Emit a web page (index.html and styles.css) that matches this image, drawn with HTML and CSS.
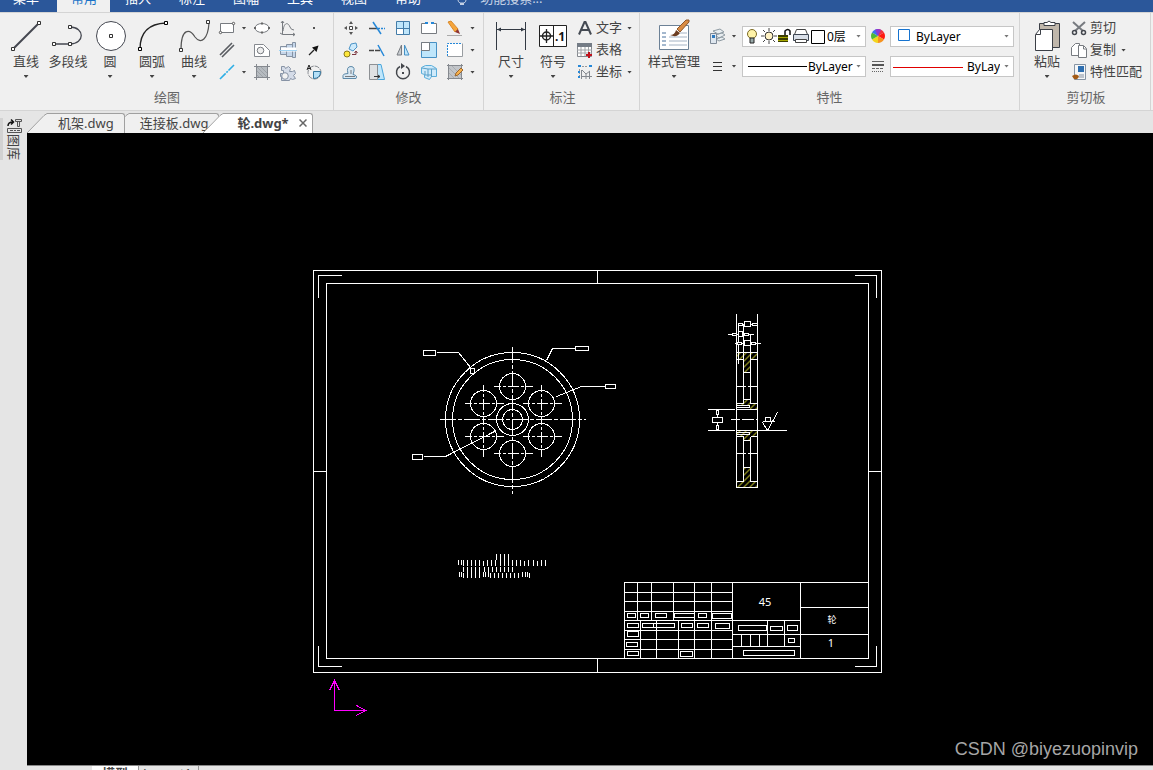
FILE: index.html
```html
<!DOCTYPE html>
<html lang="zh-CN">
  <head>
    <meta charset="UTF-8" />
    <meta name="viewport" content="width=device-width, initial-scale=1.0" />
    <title>轮.dwg</title>
    <link rel="stylesheet" href="styles.css">
  </head>
  <body>
    <nav class="menubar">
      <a href="#" class="menu-item first">菜单</a>
      <a href="#" class="menu-item active">常用</a>
      <a href="#" class="menu-item">插入</a>
      <a href="#" class="menu-item">标注</a>
      <a href="#" class="menu-item">图幅</a>
      <a href="#" class="menu-item">工具</a>
      <a href="#" class="menu-item">视图</a>
      <a href="#" class="menu-item">帮助</a>
      <svg class="bulb" width="10" height="12" viewBox="0 0 10 12"><path d="M1 0q0 2 2 3h4q2-1 2-3" fill="none" stroke="#c3d0e4"/><path d="M3 4h4" stroke="#c3d0e4" stroke-width="2"/></svg>
      <input class="search" type="text" aria-label="功能搜索" placeholder="功能搜索...">
    </nav>

    <div class="ribbon">
      <section class="group draw">
        <div class="tools">
          <button class="big"><svg width="32" height="34" viewBox="0 0 32 34"><path d="M3 30L29 4" stroke="#444750" stroke-width="2"/><g fill="#fff" stroke="#333"><path d="M1.500 28.500h3v3h-3zM27.500 2.500h3v3h-3z"/></g></svg><span>直线</span><i class="caret"></i></button>
          <button class="big"><svg width="32" height="34" viewBox="0 0 32 34"><path d="M2 25H18C33 25 33 8 18 8" fill="none" stroke="#444750" stroke-width="1.300"/><g fill="#fff" stroke="#333"><path d="M.5 23.500h3v3h-3zM16.500 23.500h3v3h-3zM16.500 6.500h3v3h-3z"/></g></svg><span>多段线</span></button>
          <button class="big"><svg width="32" height="34" viewBox="0 0 32 34"><circle cx="17" cy="17" r="14.500" fill="#fff" stroke="#444750"/><path d="M15.500 15.500h3v3h-3z" fill="#fff" stroke="#333"/></svg><span>圆</span><i class="caret"></i></button>
          <button class="big"><svg width="32" height="34" viewBox="0 0 32 34"><path d="M4 30Q4 5 30 4" fill="none" stroke="#222" stroke-width="1.300"/><g fill="#fff" stroke="#000"><path d="M2.500 28.500h3v3h-3zM28.500 2.500h3v3h-3z"/></g></svg><span>圆弧</span><i class="caret"></i></button>
          <button class="big"><svg width="32" height="34" viewBox="0 0 32 34"><path d="M3 31C3 8 12 10 17 18C23 26 30 20 31 4" fill="none" stroke="#555" stroke-width="1.200"/><g fill="#fff" stroke="#333"><path d="M1.500 29.500h3v3h-3zM28.500 1.500h3v3h-3z"/></g></svg><span>曲线</span><i class="caret"></i></button>
          <div class="draw-grid">
            <button class="small" aria-label="矩形"><svg width="18" height="18" viewBox="0 0 18 18"><path d="M2.500 4.500h13v9h-13z" fill="#fff" stroke="#777b80"/><circle cx="2.500" cy="13.500" r="1.200" fill="#fff" stroke="#555"/><circle cx="15.500" cy="4.500" r="1.200" fill="#fff" stroke="#555"/></svg></button>
            <i class="caret"></i>
            <button class="small" aria-label="椭圆"><svg width="18" height="18" viewBox="0 0 18 18"><ellipse cx="9" cy="9" rx="7" ry="4.500" fill="#fff" stroke="#777b80"/><path d="M8 3.500h2v2H8zM1 8h2v2H1zM15 8h2v2h-2zM8 12.500h2v2H8z" fill="#666"/></svg></button>
            <button class="small" aria-label="公式曲线"><svg width="18" height="18" viewBox="0 0 18 18"><path d="M3.500 2v13.500H16M1 14l2.500 1.500M2 4l1.500-2L5 4M14 14l2 1.500-2 1.500M4 12C5 3 9 3 11 8q1 3 4 3" fill="none" stroke="#777b80"/></svg></button>
            <button class="small" aria-label="点"><svg width="18" height="18" viewBox="0 0 18 18"><path d="M8 8h2v2H8z" fill="#555"/></svg></button>

            <button class="small" aria-label="平行线"><svg width="18" height="18" viewBox="0 0 18 18"><path d="M2 14L14 2M4 16L16 4" stroke="#5a5d62" stroke-width="1.600"/></svg></button>
            <span></span>
            <button class="small" aria-label="局部放大"><svg width="18" height="18" viewBox="0 0 18 18"><path d="M1.500 3.500h9l6 6v6h-15z" fill="#fff" stroke="#85898f"/><circle cx="7.500" cy="9.500" r="3.300" fill="#eee" stroke="#777b80"/></svg></button>
            <button class="small" aria-label="轴"><svg width="18" height="18" viewBox="0 0 18 18"><path d="M1.500 5.500h6v8h-6zM7.500 3.500h6v12h-6zM13.500 1.500h3v15h-3z" fill="#c5d6ea" stroke="#8592a3"/><path d="M2 8.500h15" stroke="#fff" stroke-width="4"/><path d="M0 9.500h18" stroke="#9fd4f5"/></svg></button>
            <button class="small" aria-label="箭头"><svg width="18" height="18" viewBox="0 0 18 18"><path d="M4 14L9 9" stroke="#222" stroke-width="1.300"/><path d="M13.500 4.500L11.500 11L7 6.500z" fill="#111"/></svg></button>

            <button class="small" aria-label="中心线"><svg width="18" height="18" viewBox="0 0 18 18"><path d="M2 16L16 2" stroke="#2daee5" stroke-width="1.600" stroke-dasharray="8 1 2 1"/></svg></button>
            <i class="caret"></i>
            <button class="small" aria-label="剖面线"><svg width="18" height="18" viewBox="0 0 18 18"><path d="M3 3h12v12H3z" fill="#b6bbc0"/><path d="M4 4l10 10M4 8l6 6M8 4l6 6M4 12l2 2" stroke="#9da2a7"/><path d="M1 3.500h16M1 14.500h16M3.500 1v16M14.500 1v16" stroke="#85898f"/></svg></button>
            <button class="small" aria-label="齿轮"><svg width="18" height="18" viewBox="0 0 18 18"><path d="M2.500 3.500h3l1 2 3-2 2 2-1 3h3l2-1 1 3-2 2 2 3-3 1-2-1-1 2H2.500v-4H1.500v-3h3v-3h-2z" fill="#d5dce8" stroke="#8793a5"/><circle cx="6" cy="13" r="3.300" fill="#f2f2f2" stroke="#8793a5"/></svg></button>
            <button class="small" aria-label="局部视图"><svg width="18" height="18" viewBox="0 0 18 18"><circle cx="9.500" cy="9.500" r="6.500" fill="#f0f0f0" stroke="#85898f" stroke-dasharray="5 1"/><path d="M8.500 8.500h7q0 7-7 7z" fill="#b5e0f8" stroke="#33769e"/><path d="M2 7l2-5 2 5M2.500 5.500h3" fill="none" stroke="#222"/></svg></button>
          </div>
        </div>
        <h2>绘图</h2>
      </section>

      <section class="group modify">
        <div class="tools">
          <div class="modify-grid">
            <button class="small" aria-label="平移"><svg width="18" height="18" viewBox="0 0 18 18"><path d="M7.500 7.500h3v3h-3z" fill="#fff" stroke="#444"/><path d="M9 2l2 3H7zM9 16l2-3H7zM2 9l3-2v4zM16 9l-3-2v4z" fill="#555"/></svg></button>
            <button class="small" aria-label="裁剪"><svg width="18" height="18" viewBox="0 0 18 18"><path d="M1 9.500h8" stroke="#444"  stroke-width="1.500"/><path d="M10 9.500h7" stroke="#2487d8" stroke-dasharray="2 1" stroke-width="1.500"/><path d="M5 3l8 12" stroke="#2487d8" stroke-width="1.500"/></svg></button>
            <button class="small" aria-label="阵列"><svg width="18" height="18" viewBox="0 0 18 18"><path d="M2.500 2.500h13v13h-13z" fill="#fff"/><path d="M9.500 2.500h6v7h-6zM2.500 2.500h7v7h-7zM9.500 9.500h6v6h-6z" fill="#bfe6fb"/><path d="M2.500 2.500h13v13h-13zM9.500 2v14M2 9.500h14" fill="none" stroke="#437ca8"/></svg></button>
            <button class="small" aria-label="打断"><svg width="18" height="18" viewBox="0 0 18 18"><path d="M5 4.500H1.500v10h15v-10H13" fill="#fff" stroke="#777b80"/><path d="M5 3h3v2H5zM11 3h3v2h-3z" fill="#2487d8"/></svg></button>
            <button class="small" aria-label="删除"><svg width="18" height="18" viewBox="0 0 18 18"><path d="M1 16.500h15" stroke="#aaa"/><path d="M2 3l3-1 7 8-3 3z" fill="#f6a63b" stroke="#d9892b"/><path d="M9 13l3-3 2 5z" fill="#8d3535"/></svg></button>
            <i class="caret"></i>

            <button class="small" aria-label="复制对象"><svg width="18" height="18" viewBox="0 0 18 18"><circle cx="5" cy="13" r="3" fill="#ffe83b" stroke="#8a7a1d"/><path d="M7 8l2-5 5-1 1 4-4 4z" fill="#cdeafb" stroke="#4c94c7"/><path d="M10 13.500h4v-3M12.500 12l1.500-2 1.500 2" fill="none" stroke="#7c3640"/></svg></button>
            <button class="small" aria-label="延伸"><svg width="18" height="18" viewBox="0 0 18 18"><path d="M1 9.500h5M7 9.500h5" stroke="#444" stroke-width="1.500"/><path d="M10 4l6 11" stroke="#2487d8" stroke-width="1.500"/></svg></button>
            <button class="small" aria-label="镜像"><svg width="18" height="18" viewBox="0 0 18 18"><path d="M7.500 4v10H3z" fill="#c9cdd1" stroke="#777b80"/><path d="M10.500 4v10H15z" fill="#bfe6fb" stroke="#4690c4"/></svg></button>
            <button class="small" aria-label="缩放"><svg width="18" height="18" viewBox="0 0 18 18"><path d="M1.500 1.500h15v15h-15z" fill="#bfe6fb" stroke="#4690c4"/><path d="M1.500 1.500h8v8h-8z" fill="#fff" stroke="#777b80"/></svg></button>
            <button class="small" aria-label="分解"><svg width="18" height="18" viewBox="0 0 18 18"><path d="M1.500 2.500h15v13h-15z" fill="#fff"/><path d="M1.500 15.500h15v-13" fill="none" stroke="#999da1"/><path d="M1.500 15V2.500H16" fill="none" stroke="#2487d8" stroke-dasharray="2 1"/></svg></button>
            <i class="caret"></i>

            <button class="small" aria-label="等距线"><svg width="18" height="18" viewBox="0 0 18 18"><path d="M1 15.500h13q2-3-3-4 3-8-2-8t-3 7q-5 0-5 2z" fill="#d8e8f3" stroke="#5d89a8"/><path d="M3 13.500h10M9 7v4" stroke="#777b80"/></svg></button>
            <button class="small" aria-label="拉伸"><svg width="18" height="18" viewBox="0 0 18 18"><path d="M9 1.500l4 0 3.500 15H7z" fill="#bfe6fb" stroke="#4aa6dc"/><path d="M1.500 1.500h8v15h-8z" fill="#dfe1e3" stroke="#8d9094"/><path d="M6 13.500h6M10 12l2 1.500-2 1.500" fill="none" stroke="#333"/></svg></button>
            <button class="small" aria-label="旋转"><svg width="18" height="18" viewBox="0 0 18 18"><path d="M6 3.500A6.500 6.500 0 1 0 12 3.500" fill="none" stroke="#44474c" stroke-width="1.500"/><path d="M7 0v6l4-3zM8 9h2v2H8z" fill="#44474c"/></svg></button>
            <button class="small" aria-label="三维"><svg width="18" height="18" viewBox="0 0 18 18"><path d="M1.500 4.500l4-2h6l5 3v8h-5l-2 3-5-2v-3l-3-1z" fill="#cfeafa" stroke="#5aaedb"/><path d="M2 5l6 1v8M8 6h8M11.500 6v8M5 8v4h6" fill="none" stroke="#5aa0c8"/></svg></button>
            <button class="small" aria-label="编辑填充"><svg width="18" height="18" viewBox="0 0 18 18"><path d="M2.500 2.500h13v13h-13z" fill="#c2c5c9" stroke="#85898f"/><path d="M3 5l10 10M3 10l5 5M6 3l9 9" stroke="#a8acb0"/><path d="M1 2.500h16M1 15.500h16M2.500 1v16M15.500 1v16" stroke="#85898f"/><path d="M9 13l1-3 5-5 2 2-5 5z" fill="#f6b04b" stroke="#9a6731"/></svg></button>
            <i class="caret"></i>
          </div>
        </div>
        <h2>修改</h2>
      </section>

      <section class="group annotate">
        <div class="tools">
          <button class="big"><svg width="32" height="34" viewBox="0 0 32 34"><path d="M1.500 3v28M30.500 3v28M2 10.500h28" stroke="#333a44"/><path d="M2 10.500l4-2v4zM30 10.500l-4-2v4z" fill="#333a44"/></svg><span>尺寸</span><i class="caret"></i></button>
          <button class="big"><svg width="32" height="34" viewBox="0 0 32 34"><path d="M2.500 6.500h27v21h-27zM16.500 6v22" fill="#fff" stroke="#222"/><circle cx="9.500" cy="17" r="4" fill="none" stroke="#222" stroke-width="1.500"/><path d="M3 17h13M9.500 10v14" stroke="#222" stroke-width="1.300"/><text x="18" y="22" class="symbol-number">.1</text></svg><span>符号</span><i class="caret"></i></button>
          <div class="list">
            <button class="row"><svg width="18" height="18" viewBox="0 0 18 18"><path d="M3 15.500L8.500 3h1L15 15.500M5 11h8" fill="none" stroke="#444a53" stroke-width="2"/></svg><span>文字</span><i class="caret"></i></button>
            <button class="row"><svg width="18" height="18" viewBox="0 0 18 18"><path d="M1.500 3.500h14v12h-14z" fill="#fff" stroke="#85898f"/><path d="M1 2h15v4H1z" fill="#747c86"/><path d="M1 9h15M1 12h15M5 6v9M9 6v9M12.500 6v9" stroke="#a0a4a8"/><path d="M10 14h6M13 11v6" stroke="#c0121d" stroke-width="2"/></svg><span>表格</span></button>
            <button class="row"><svg width="18" height="18" viewBox="0 0 18 18"><path d="M5.500 7v9M5 13.500h11M13.500 8v8M6 7l4 4 4-3M10 11v5" fill="none" stroke="#85898f"/><path d="M6 3.500h6M3.500 6v7" stroke="#999" stroke-dasharray="2 1"/><path d="M2 3h3M13 3h3M2 9h2M2 14h2" stroke="#2487d8" stroke-width="2"/></svg><span>坐标</span><i class="caret"></i></button>
          </div>
        </div>
        <h2>标注</h2>
      </section>

      <section class="group props">
        <div class="tools">
          <button class="big wide"><svg width="32" height="34" viewBox="0 0 32 34"><path d="M1.500 6.500h29v24h-29z" fill="#fff" stroke="#6c8196"/><path d="M4 14h4M4 18h4M4 22h4M4 26h4" stroke="#49719c"/><path d="M11 18h18M11 22h18M11 26h18M22 14h7" stroke="#a4b3c4"/><path d="M19 10L28 1l3 0 0 2-9 10z" fill="#d98b42" stroke="#8c562b"/><path d="M12 16q5 0 6-5l4 3q-3 5-10 2z" fill="#6b3c20"/></svg><span>样式管理</span><i class="caret"></i></button>
          <div class="props-grid">
            <button class="small" aria-label="图层"><svg width="18" height="18" viewBox="0 0 18 18"><path d="M5 4l7-2 4 3-6 2zM7 8l7-2 3 2-6 3zM8 12l6-2 3 2-6 2z" fill="#e8edf0" stroke="#8f9ba3"/><path d="M2.500 6.500h6v10h-6z" fill="#dfe7ef" stroke="#7e8a98"/><path d="M4 8h3v3H4z" fill="#2d79bf"/></svg></button>
            <i class="caret"></i>
            <div class="combo">
              <svg width="66" height="18" viewBox="0 0 66 18"><circle cx="8" cy="7" r="4.500" fill="#fff3a8" stroke="#7c6a25"/><path d="M6 11h4v5H6z" fill="#9aa" stroke="#222"/><circle cx="25" cy="9" r="4" fill="#fff2c4" stroke="#333"/><path d="M25 1v3M25 14v3M17 9h3M30 9h3M19 3l2 2M31 3l-2 2M19 15l2-2M31 15l-2-2" stroke="#444"/><path d="M34 8h10v7H34z" fill="#3c3d00"/><path d="M34 10.500h10M34 13.500h10" stroke="#a7a900"/><path d="M41 8V4q3-3 5 0v4" fill="none" stroke="#111" stroke-width="1.500"/><path d="M52.500 2.500h9l2 5h-13z" fill="#fff" stroke="#444"/><path d="M49.500 7.500h15v6h-15z" fill="#d9dfe8" stroke="#3d4653"/><path d="M51.500 12.500h11v3h-11z" fill="#fff" stroke="#444"/></svg>
              <svg class="layer-swatch" width="14" height="16" viewBox="0 0 14 16"><path d="M.5 2.500h13v13H.5z" fill="#fff" stroke="#000"/></svg>
              <select aria-label="图层选择"><option>0层</option></select><i class="caret grey"></i>
            </div>
            <button class="small" aria-label="颜色"><svg width="18" height="18" viewBox="0 0 18 18"><path d="M9 9V2A7 7 0 0 1 15 5.500z" fill="#ee3340"/><path d="M9 9L15 5.500A7 7 0 0 1 15 12.500z" fill="#ff1a10"/><path d="M9 9L15 12.500A7 7 0 0 1 9 16z" fill="#f6931f"/><path d="M9 9V16A7 7 0 0 1 3 12.500z" fill="#f3d51d"/><path d="M9 9L3 12.500A7 7 0 0 1 3 5.500z" fill="#4eb836"/><path d="M9 9L3 5.500A7 7 0 0 1 9 2z" fill="#3971ee"/><path d="M9 9L6 2.700A7 7 0 0 1 12 2.700z" fill="#9137d0"/></svg></button>
            <div class="combo">
              <svg width="22" height="18" viewBox="0 0 22 18"><path d="M6.500 2.500h11v11h-11z" fill="#fff" stroke="#1673cf"/></svg>
              <select class="indent" aria-label="颜色选择"><option>ByLayer</option></select><i class="caret grey"></i>
            </div>

            <button class="small" aria-label="线宽"><svg width="18" height="18" viewBox="0 0 18 18"><path d="M5 5.500h9M5 9.500h9M5 13.500h9" stroke="#333"/></svg></button>
            <i class="caret"></i>
            <div class="combo">
              <svg class="line" width="64" height="18" viewBox="0 0 64 18"><path d="M4 9.500h59" stroke="#000"/></svg>
              <select aria-label="线宽选择"><option>ByLayer</option></select><i class="caret grey"></i>
            </div>
            <button class="small" aria-label="线型"><svg width="18" height="18" viewBox="0 0 18 18"><path d="M3 4.500h12" stroke="#666"/><path d="M3 8h12" stroke="#555" stroke-width="2"/><path d="M3 11.500h12" stroke="#666" stroke-dasharray="3 1"/><path d="M3 14.500h12" stroke="#666" stroke-dasharray="1 1"/></svg></button>
            <div class="combo">
              <svg class="line" width="72" height="18" viewBox="0 0 72 18"><path d="M1 10.500h70" stroke="#e00000"/></svg>
              <select class="clip" aria-label="线型选择"><option>ByLayer</option></select><i class="caret grey"></i>
            </div>
          </div>
        </div>
        <h2>特性</h2>
      </section>

      <section class="group clipboard">
        <div class="tools">
          <button class="big"><svg width="32" height="34" viewBox="0 0 32 34"><path d="M8.500 4.500h20v24h-20z" fill="#c0b7ab" stroke="#3b3f46"/><path d="M13 3.500h3q2-3 4 0h4v3H13z" fill="#fff" stroke="#3b3f46"/><path d="M8.500 10.500h13v21h-17v-16z" fill="#fff" stroke="#3b3f46"/><path d="M9.500 11v4.500H5" fill="none" stroke="#3b3f46"/></svg><span>粘贴</span><i class="caret"></i></button>
          <div class="list">
            <button class="row"><svg width="18" height="18" viewBox="0 0 18 18"><path d="M3 3l10 9M15 3L5 12" stroke="#777b80" stroke-width="2"/><circle cx="4.500" cy="13.500" r="2" fill="none" stroke="#44484f" stroke-width="1.500"/><circle cx="13.500" cy="13.500" r="2" fill="none" stroke="#44484f" stroke-width="1.500"/></svg><span>剪切</span></button>
            <button class="row"><svg width="18" height="18" viewBox="0 0 18 18"><path d="M5.500 2.500h4v12h-8v-8z" fill="#fff" stroke="#777b80"/><path d="M8.500 4.500h5l3 3v9h-8z" fill="#fff" stroke="#777b80"/><path d="M13.500 5v3H16" fill="none" stroke="#777b80"/></svg><span>复制</span><i class="caret"></i></button>
            <button class="row"><svg width="18" height="18" viewBox="0 0 18 18"><path d="M4.500 1.500h11v15h-11z" fill="#f4f6f8" stroke="#8593a3"/><path d="M8 3h6v6H8z" fill="#2d6eb0"/><path d="M9 12h5M9 14h5" stroke="#8591a0"/><path d="M2 13q4-3 7 0-1 4-5 3z" fill="#a35a15"/></svg><span>特性匹配</span></button>
          </div>
        </div>
        <h2>剪切板</h2>
      </section>
    </div>

    <div class="workspace">
      <aside class="side">
        <button class="library">
          <svg width="15" height="16" viewBox="0 0 15 16"><path d="M1 8q0-4 5-4M4 1.500l2.500 2.500L4 6.500" fill="none" stroke="#111" stroke-width="1.500"/><path d="M8.500 1.500h6v2h-6zM10.500 3.500h2v5h-2z" fill="#ddd" stroke="#555"/><path d="M.5 10.500h14v4H.5z" fill="#e5e5e5" stroke="#555"/><path d="M3 12.500h3M7 12.500h2M10 12.500h3" stroke="#555"/></svg>
          <span>图库</span>
        </button>
      </aside>
      <main class="main">
        <div class="doc-tabs">
          <a href="#" class="doc-tab one"><svg width="20" height="20" viewBox="0 0 20 20"><path d="M0 20L17 2l3-2v20z" fill="#f0f0f0"/><path d="M0 20L17 2.500l3-2" fill="none" stroke="#a0a0a0"/></svg><span>机架.dwg</span></a>
          <a href="#" class="doc-tab two"><svg width="20" height="20" viewBox="0 0 20 20"><path d="M0 20L17 2l3-2v20z" fill="#f0f0f0"/><path d="M0 20L17 2.500l3-2" fill="none" stroke="#a0a0a0"/></svg><span>连接板.dwg</span></a>
          <a href="#" class="doc-tab current"><svg width="20" height="20" viewBox="0 0 20 20"><path d="M0 20L17 2l3-2v20z" fill="#fff"/><path d="M0 20L17 2.500l3-2" fill="none" stroke="#a0a0a0"/></svg><span>轮.dwg*<svg class="close" width="8" height="8" viewBox="0 0 8 8"><path d="M.5.5l7 7M7.500.5l-7 7" stroke="#666" stroke-width="1.500"/></svg></span></a>
        </div>

        <div class="canvas">
          <svg class="drawing" viewBox="27 133 1126 632">
            <defs>
              <pattern id="hatch" width="6" height="6" patternUnits="userSpaceOnUse"><path d="M-1 7L7-1M-1 1L1-1M5 7l2-2" stroke="#ffff33" /></pattern>
            </defs>
            <g transform="translate(.5 .5)" class="lines">
              <!-- sheet frame -->
              <rect x="313" y="270" width="568" height="402"/>
              <rect x="326" y="283" width="542" height="375"/>
              <path d="M318 297V275H341M854 275H876V297M318 645V666H341M854 666H876V645"/>
              <path d="M597 270V283M597 658V672M313 471H326M868 471H881"/>

              <!-- wheel, front view -->
              <circle cx="512" cy="419" r="67"/>
              <circle cx="512" cy="419" r="60"/>
              <circle cx="512" cy="419" r="16"/>
              <circle cx="512" cy="419" r="10"/>
              <circle cx="512" cy="386" r="13"/>
              <circle cx="512" cy="453" r="13"/>
              <circle cx="483" cy="403" r="13"/>
              <circle cx="541" cy="403" r="13"/>
              <circle cx="483" cy="436" r="13"/>
              <circle cx="541" cy="436" r="13"/>
              <path class="axis" d="M439 419H585M512 346V493"/>
              <path class="axis-short" d="M493 386H532M493 453H532M464 403H503M522 403H561M464 436H503M522 436H561M483 384V423M541 384V423M483 417V456M541 417V456"/>
              <path d="M436 352H458L470 367M575 348H552L546 360M605 386H581L556 396M423 456H445L496 430"/>
              <path d="M423 350h12v5h-12zM470 368h4v5h-4zM575 346h13v4h-13zM605 384h10v4h-10zM412 454h10v5h-10z"/>

              <!-- section view -->
              <g class="hatch">
                <path d="M736 352H757V359H750V372H743V359H736zM743 399H750V403H757V409H749V405H736V403H743zM736 436V430H757V436H750V440H743V436zM743 467H750V481H757V487H736V481H743z"/>
              </g>
              <path d="M736 313V487H757V313M743 324V403M750 334V403M743 436V481M750 436V481M738 324V363"/>
              <path d="M736 352H757M736 359H743M750 359H757M743 372H750M743 399H750M736 403H743M750 403H757M736 409H757M736 405H749V407H736M736 430H757M736 432H749V434H736M736 436H743M750 436H757M743 440H750M743 467H750M736 481H743M750 481H757"/>
              <path d="M736 386H757M736 453H757" stroke-dasharray="9 2"/>
              <path d="M730 419H756" stroke-dasharray="9 2 12 2"/>
              <path d="M738 324H757M727 334H753M734 343H760"/>
              <path class="box" d="M738 323h4v2h-4zM744 321h6v5h-6zM752 323h5v2h-5zM732 333h4v2h-4zM738 331h4v5h-4zM744 333h4v2h-4zM737 342h4v2h-4zM744 340h6v5h-6zM751 342h4v2h-4z"/>
              <path d="M707 409H734M707 430H734M757 430H786M717 409V430M762 421H774M762 422L767 430L777 412"/>
              <path class="box" d="M712 417h10v5h-10zM716 410h2v4h-2zM716 425h2v4h-2zM765 417h5v4h-5z"/>

              <!-- notes -->
              <path d="M496 553v6M500 553v12M504 553v12M508 553v12M458 559v5M461 559v5M463 559v6M467 559v6M471 559v6M475 559v6M479 559v6M483 560v5M487 559v6M491 559v6M495 559v6M512 559v6M516 559v6M520 559v6M524 560v5M528 559v6M533 559v6M537 560v5M541 559v6M545 559v6"/>
              <path d="M463 566v5M467 566v11M471 566v11M475 566v11M479 566v11M484 566v5M488 566v5M492 566v5M496 566v5M500 566v5M504 566v5M508 566v5M512 566v5M459 571v5M461 571v5M463 572v5M483 571v5M485 571v5M488 571v5M490 572v5M494 572v5M498 572v5M502 572v5M506 572v5M510 572v5M514 572v5M518 572v5M522 571v5M525 571v5M527 571v5M529 572v5"/>

              <!-- title block -->
              <path d="M624 658V582H868M732 582V658M800 582V658"/>
              <path d="M637 582V620M651 582V620M673 582V620M694 582V658M711 582V658M640 620V658M656 620V658M678 620V658"/>
              <path d="M624 592H732M624 601H732M624 611H732M624 620H800M624 630H732M624 639H732M624 649H732"/>
              <path d="M732 634H800M732 646H800M767 620V646M784 620V646M741 634V646M750 634V646M759 634V646M800 607H868M800 634H868"/>
              <path d="M627 613h8v4h-8zM640 613h8v4h-8zM655 613h11v4h-11zM674 613h20v4h-20zM698 613h8v4h-8zM712 613h19v5h-19z"/>
              <path d="M627 623h11v4h-11zM642 623h14v4h-14zM653 623h21v4h-21zM681 623h11v4h-11zM697 623h11v4h-11zM715 623h14v5h-14z"/>
              <path d="M627 631h11v5h-11zM626 642h11v4h-11zM627 651h11v4h-11zM680 651h12v5h-12z"/>
              <path d="M738 625h28v5h-28zM770 626h12v4h-12zM787 625h10v5h-10zM788 638h6v4h-6zM743 650h51v5h-51z"/>
            </g>
            <g class="drawing-text">
              <text x="765" y="606">45</text>
              <text x="832" y="623" class="part-name">轮</text>
              <text x="831" y="647">1</text>
            </g>
            <path class="ucs" transform="translate(.5 .5)" d="M334 680V710H365M329 690L334 680L339 690M356 705L365 710L356 715"/>
          </svg>
          <span class="watermark">CSDN @biyezuopinvip</span>
        </div>

        <div class="layout-tabs">
          <a href="#" class="layout-tab current">模型</a>
          <a href="#" class="layout-tab">Layout1</a>
        </div>
      </main>
    </div>
  </body>
</html>
```

FILE: styles.css
```css
* {
  box-sizing: border-box;
}

body {
  display: flex;
  flex-direction: column;
  height: 100vh;
  margin: 0;
  overflow: hidden;
  background: #e5e5e5;
  color: #444;
  font-family: "Noto Sans", "Noto Sans CJK SC", sans-serif;
  font-size: 13px;
}

button {
  padding: 0;
  border: 0;
  background: none;
  color: inherit;
  font: inherit;
  cursor: pointer;
}

a {
  color: inherit;
  text-decoration: none;
}

svg {
  display: block;
  flex: none;
}

/* menu */
.menubar {
  display: flex;
  align-items: flex-end;
  flex: none;
  height: 12px;
  overflow: hidden;
  background: #2b579a;
  color: #fff;
}

.menu-item {
  padding: 0 14px 4px;
  line-height: 20px;
}

.menu-item.first {
  padding-left: 13px;
  padding-right: 18px;
}

.menu-item.active {
  padding-right: 13px;
  margin-right: 1px;
  background: #f0f0f0;
  color: #1a73c8;
}

.bulb {
  margin-left: 22px;
}

.search {
  width: 120px;
  height: 20px;
  margin: 0 0 4px 13px;
  padding: 0;
  border: 0;
  background: none;
  font: inherit;
  color: #fff;
}

.search::placeholder {
  color: #c3d0e4;
}

/* ribbon */
.ribbon {
  display: flex;
  flex: none;
  border-top: 1px solid #d4d4d4;
  border-bottom: 1px solid #d4d4d4;
  background: #f0f0f0;
}

.group {
  padding: 4px 4px 3px;
  border-right: 1px solid #d4d4d4;
}

.group h2 {
  margin: 2px 0 0;
  color: #666;
  font-size: 13px;
  font-weight: 400;
  line-height: 20px;
  text-align: center;
}

.tools {
  display: flex;
  height: 68px;
}

.draw {
  width: 334px;
  padding-left: 5px;
}

.modify {
  width: 150px;
}

.annotate {
  width: 156px;
  padding-left: 6px;
}

.props {
  width: 380px;
}

.clipboard {
  width: 131px;
  padding-left: 6px;
}

.big {
  display: flex;
  flex-direction: column;
  align-items: center;
  width: 42px;
  padding-top: 2px;
  line-height: 17px;
  white-space: nowrap;
}

.big.wide {
  width: 60px;
}

.big .caret {
  margin-top: 5px;
}

.caret {
  width: 5px;
  height: 3px;
  background: #444;
  clip-path: polygon(0 0, 100% 0, 50% 100%);
}

.caret.grey {
  background: #777;
}

.draw-grid,
.modify-grid {
  display: grid;
  grid-auto-rows: 22px;
  align-items: center;
  justify-items: center;
}

.draw-grid {
  grid-template-columns: 22px 12px 24px 28px 24px;
  margin-left: 1px;
}

.modify-grid {
  grid-template-columns: repeat(5, 26px) 9px;
}

.list {
  display: flex;
  flex-direction: column;
  margin-left: 2px;
}

.row {
  display: flex;
  align-items: center;
  gap: 2px;
  height: 22px;
  white-space: nowrap;
}

.row span {
  padding-bottom: 3px;
}

.row .caret {
  margin-left: 3px;
}

.symbol-number {
  fill: #111;
  font-size: 12px;
  font-weight: 700;
}

.props-grid {
  display: grid;
  grid-template-columns: 18px 10px 124px 18px 124px;
  grid-auto-rows: 30px;
  align-items: center;
  justify-items: center;
  column-gap: 3px;
  margin: 4px 0 0 4px;
}

.combo {
  display: flex;
  align-items: center;
  width: 100%;
  height: 21px;
  padding: 0 4px 0 1px;
  border: 1px solid #c6c6c6;
  background: #fff;
}

.combo select {
  flex: 1;
  min-width: 0;
  padding: 0;
  border: 0;
  appearance: none;
  background: none;
  color: #000;
  font-family: inherit;
  font-size: 12px;
}

.combo select.indent {
  padding-left: 2px;
}

.combo select.clip {
  margin-right: 4px;
  padding-left: 3px;
}

.layer-swatch {
  margin: 0 2px 0 1px;
}

/* workspace */
.workspace {
  display: flex;
  flex: 1;
  min-height: 0;
}

.side {
  flex: none;
  width: 27px;
  padding-top: 7px;
}

.library {
  display: flex;
  flex-direction: column;
  align-items: center;
  width: 22px;
  padding-left: 3px;
  border-left: 3px solid #d2d2d2;
}

.library span {
  writing-mode: vertical-rl;
  text-orientation: sideways;
  line-height: 14px;
}

.main {
  display: flex;
  flex: 1;
  flex-direction: column;
  min-width: 0;
}

.doc-tabs {
  display: flex;
  flex: none;
  align-items: flex-end;
  height: 22px;
}

.doc-tab {
  display: flex;
  position: relative;
  height: 20px;
  line-height: 16px;
}

.doc-tab > span {
  display: flex;
  align-items: center;
  padding: 0 10px 2px 11px;
  border-top: 1px solid #a0a0a0;
  border-right: 1px solid #a0a0a0;
  border-radius: 0 3px 0 0;
  background: #f0f0f0;
}

.doc-tab + .doc-tab {
  margin-left: -16px;
}

.doc-tab.one {
  z-index: 2;
}

.doc-tab.current {
  z-index: 3;
  font-weight: 700;
}

.doc-tab.current > span {
  padding-right: 5px;
  padding-left: 14px;
  background: #fff;
}

.close {
  margin-left: 10px;
}

.canvas {
  flex: 1;
  min-height: 0;
  position: relative;
  background: #000;
}

.drawing {
  width: 100%;
  height: 100%;
}

.lines {
  fill: none;
  stroke: #fff;
  shape-rendering: crispEdges;
}

.lines .box {
  fill: #000;
}

.axis {
  stroke-dasharray: 16 2 4 2;
}

.axis-short {
  stroke-dasharray: 7 2 3 2 11 2 3 2;
}

.hatch path {
  fill: url(#hatch);
  stroke: none;
}

.drawing-text {
  fill: #fff;
  font-size: 11px;
  text-anchor: middle;
}

.part-name {
  font-size: 9px;
}

.ucs {
  fill: none;
  stroke: #f0f;
  shape-rendering: crispEdges;
}

.watermark {
  position: absolute;
  right: 15px;
  bottom: 5px;
  color: #a6a6a6;
  font-family: "Liberation Sans", sans-serif;
  font-size: 18px;
  line-height: 21px;
}

.layout-tabs {
  display: flex;
  flex: none;
  height: 5px;
  padding-left: 65px;
  overflow: hidden;
  border-top: 1px solid #888;
}

.layout-tab {
  height: 18px;
  padding: 0 6px 0 4px;
  border-right: 1px solid #999;
  line-height: 14px;
}

.layout-tab.current {
  padding: 0 10px;
  background: #fff;
  font-weight: 700;
}
```
